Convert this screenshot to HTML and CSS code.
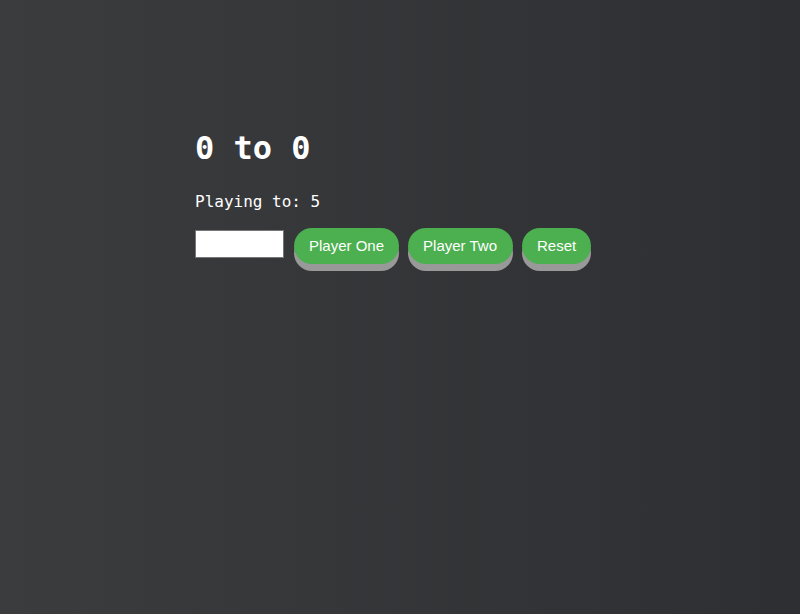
FILE: index.html
```html
<!DOCTYPE html>
<html>
<head>
<meta charset="utf-8">
<link rel="stylesheet" href="styles.css">
</head>
<body>
<div class="app">
  <h1 class="score">0 to 0</h1>
  <p class="target">Playing to: 5</p>
  <div class="controls">
    <input class="limit" type="number">
    <button class="btn">Player One</button>
    <button class="btn btn-wide">Player Two</button>
    <button class="btn">Reset</button>
  </div>
</div>
</body>
</html>
```
FILE: styles.css
```css
html, body {
  margin: 0;
  height: 100%;
}
body {
  background: linear-gradient(to right, #3b3c3e, #2e2f32);
  color: #ffffff;
  font-family: "DejaVu Sans Mono", monospace;
}
.app {
  width: 410px;
  margin: 0 auto;
  padding-top: 130px;
}
.score {
  margin: 0;
  font-size: 32px;
  font-weight: bold;
  line-height: 37px;
}
.target {
  margin: 25px 0 0;
  font-size: 16px;
  line-height: 19px;
}
.controls {
  margin-top: 17px;
  display: flex;
  align-items: flex-start;
  gap: 9px;
}
.limit {
  margin-top: 2px;
  margin-right: 1px;
  box-sizing: border-box;
  width: 89px;
  height: 28px;
  border: 1px solid #767676;
  background: #ffffff;
  padding: 0 4px;
}
.btn {
  height: 36px;
  padding: 0 15px 2px;
  border: none;
  border-radius: 18px;
  background: #4caf50;
  color: #ffffff;
  font-family: "Liberation Sans", Arial, sans-serif;
  font-size: 15px;
  box-shadow: 0 7px #999999;
  cursor: pointer;
}
.btn-wide {
  padding: 0 16px 2px 15px;
}
```
